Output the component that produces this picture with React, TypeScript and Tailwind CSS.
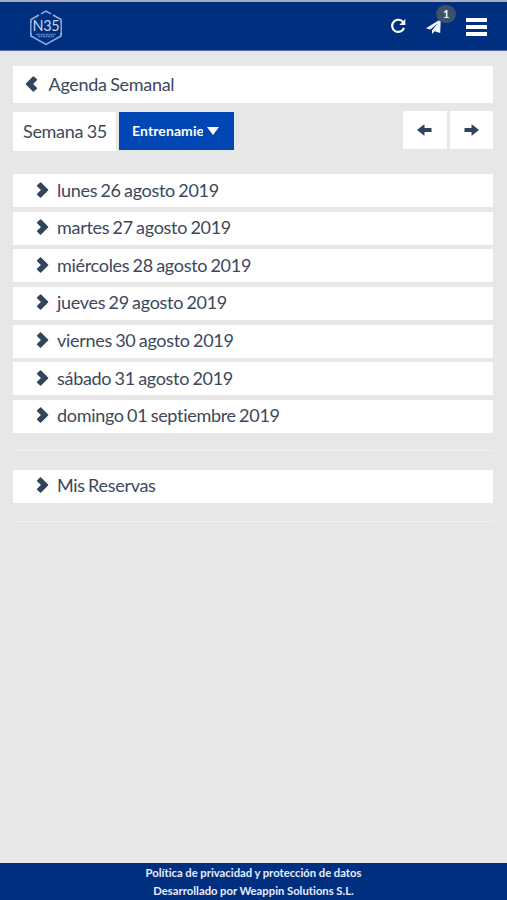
import type { ReactNode } from "react";

const days = [
  "lunes 26 agosto 2019",
  "martes 27 agosto 2019",
  "miércoles 28 agosto 2019",
  "jueves 29 agosto 2019",
  "viernes 30 agosto 2019",
  "sábado 31 agosto 2019",
  "domingo 01 septiembre 2019",
];

function Logo() {
  return (
    <svg width="34" height="36" viewBox="0 0 34 36" fill="none" className="relative top-[2px]">
      <path
        d="M12 3.800 17 1l5 2.800M24 5l8 4.500v3M32 23v3L17 34.500 2 26v-3M2 12.500V9.500L10 5"
        stroke="#8fb0e0"
        strokeWidth="1.500"
      />
      <path d="M1.800 11v14M32.200 11v14" stroke="#8fb0e0" strokeWidth="1.400" />
      <text
        x="3.500"
        y="21"
        fontSize="16"
        fill="#c3d7f5"
        textLength="27"
        lengthAdjust="spacingAndGlyphs"
      >
        N35
      </text>
      <path d="M7 24.500h20M9 26.500h16" stroke="#5c80bd" strokeWidth="1.500" strokeDasharray="2 .5" />
    </svg>
  );
}

function RefreshIcon() {
  return (
    <svg width="16" height="16" viewBox="0 0 16 16" fill="none">
      <path d="M13.200 4.300A6.100 6.100 0 1 0 14 9.800" stroke="#fff" strokeWidth="2.200" />
      <path d="M15.300 1v6H9.300z" fill="#fff" />
    </svg>
  );
}

function SendIcon() {
  return (
    <svg width="16" height="15" viewBox="0 0 16 15" fill="#f2f6ff">
      <path d="M14.800 0 0 9.200l4.400 1.300L12 4.200 6 11.300V15l2.600-2.800 5.600 1.800z" />
    </svg>
  );
}

function Chevron({ left }: { left?: boolean }) {
  return (
    <svg width="13" height="16" viewBox="0 0 13 16" className={left ? "rotate-180" : ""}>
      <path
        d="M1.100 3.300 4 .5q.6-.4 1.100 0l7 6.900q.5.600 0 1.200l-7 6.900q-.5.400-1.100 0L1.100 12.700q-.5-.5 0-1L4.900 8 1.100 4.300q-.5-.5 0-1z"
        fill="#30455c"
      />
    </svg>
  );
}

function Arrow({ left }: { left?: boolean }) {
  return (
    <svg width="15" height="12" viewBox="0 0 15 12" className={left ? "rotate-180" : ""}>
      <path d="M.5 4h7V1q.1-.9.900-.3l6 4.800q.5.500 0 1l-6 4.800q-.8.500-.9-.4V8h-7z" fill="#30455c" />
    </svg>
  );
}

function Row({ children }: { children: ReactNode }) {
  return (
    <button className="flex h-[33px] w-full items-center gap-2 bg-white pb-[2px] pl-[23px] text-left [word-spacing:-1px]">
      <Chevron />
      <span>{children}</span>
    </button>
  );
}

export default function App() {
  return (
    <div className="flex h-[900px] w-full flex-col bg-[#e7e7e7] font-['Lato',sans-serif] text-[18px] leading-6 tracking-[-0.3px] text-[#3c485d] [word-spacing:-0.8px]">
      <header className="flex h-[51px] shrink-0 items-center border-t-2 border-b border-t-[#a9aeba] border-b-[#5672a5] bg-[#002f80] pr-5 pl-[29px]">
        <Logo />
        <div className="ml-auto flex items-center">
          <RefreshIcon />
          <div className="relative ml-5">
            <SendIcon />
            <span className="absolute -top-[14px] left-[10px] flex h-[18px] w-5 items-center justify-center rounded-full bg-[#3b5269] text-[11px] font-bold text-white">
              1
            </span>
          </div>
          <div className="mt-px ml-6 flex flex-col gap-[3px]">
            <span className="h-1 w-[21px] bg-white" />
            <span className="h-1 w-[21px] bg-white" />
            <span className="h-1 w-[21px] bg-white" />
          </div>
        </div>
      </header>

      <main className="flex-1 pt-[15px] pr-[14px] pl-[13px]">
        <div className="flex h-[37px] items-center gap-[10.5px] bg-white pb-[2px] pl-3">
          <Chevron left />
          <h1>Agenda Semanal</h1>
        </div>

        <div className="mt-2 flex">
          <div className="mt-px flex h-[39px] w-[103px] items-center bg-white pb-[2px] pl-[10px] whitespace-nowrap">
            Semana 35
          </div>
          <button className="mt-px ml-[3px] flex h-[38px] w-[115px] items-center bg-[#0046b5] pl-[13px] text-sm font-bold tracking-[0.1px] text-white">
            <span className="w-[71px] overflow-hidden whitespace-nowrap">Entrenamiento</span>
            <svg width="12" height="8" viewBox="0 0 12 8" className="ml-1">
              <path d="M0 0h12L6 8z" fill="#fff" />
            </svg>
          </button>
          <div className="ml-auto flex gap-[3px]">
            <button className="flex h-[38px] w-11 items-center justify-center bg-white pr-px">
              <Arrow left />
            </button>
            <button className="flex h-[38px] w-[43px] items-center justify-center bg-white pr-px">
              <Arrow />
            </button>
          </div>
        </div>

        <div className="mt-[23px] flex flex-col gap-[4.650px]">
          {days.map((day) => (
            <Row key={day}>{day}</Row>
          ))}
        </div>

        <hr className="mt-[17.600px] mb-[18.400px] border-[#f0f0f0]" />
        <Row>Mis Reservas</Row>
        <hr className="mt-[18px] border-[#f0f0f0]" />
      </main>

      <footer className="h-[37px] shrink-0 bg-[#002f80] pt-px text-center text-[11.250px] leading-[18px] font-bold tracking-[0.02px] text-[#e6eeff] [word-spacing:-0.200px]">
        <p>Política de privacidad y protección de datos</p>
        <p>Desarrollado por Weappin Solutions S.L.</p>
      </footer>
    </div>
  );
}
